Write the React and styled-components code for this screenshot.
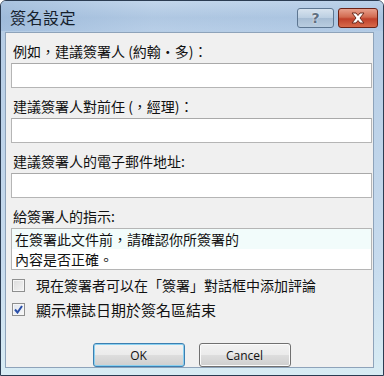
import React from 'react'
import styled, { createGlobalStyle } from 'styled-components'

const GlobalStyle = createGlobalStyle`
  html, body {
    margin: 0;
    padding: 0;
    background: #ffffff;
  }
  body {
    font-family: "Noto Sans CJK TC", "Noto Sans", sans-serif;
  }
`

const App = () => {
  return (
    <>
      <GlobalStyle />
      <Window>
        <TitleBar>
          <Title>簽名設定</Title>
          <Controls>
            <HelpButton>?</HelpButton>
            <CloseButton>
              <svg width="16" height="12" viewBox="0 0 16 12">
                <path
                  d="M2 1 L6 1 L8 3.5 L10 1 L14 1 L10 6 L14 11 L10 11 L8 8.5 L6 11 L2 11 L6 6 Z"
                  fill="#ffffff"
                  stroke="#6b2a1c"
                  strokeWidth="1"
                  strokeLinejoin="round"
                />
              </svg>
            </CloseButton>
          </Controls>
        </TitleBar>

        <Body>
          <Field>
            <Label>例如，建議簽署人 (約翰·多)：</Label>
            <Input />
          </Field>
          <Field>
            <Label>建議簽署人對前任 (，經理)：</Label>
            <Input />
          </Field>
          <Field>
            <Label>建議簽署人的電子郵件地址:</Label>
            <Input />
          </Field>
          <Field>
            <Label>給簽署人的指示:</Label>
            <TextArea>
              <TextLine>在簽署此文件前，請確認你所簽署的</TextLine>
              <TextLine>內容是否正確。</TextLine>
            </TextArea>
          </Field>

          <Checks>
            <CheckRow>
              <Box />
              <CheckText>現在簽署者可以在「簽署」對話框中添加評論</CheckText>
            </CheckRow>
            <CheckRow>
              <Box checked>
                <svg width="9" height="9" viewBox="0 0 9 9">
                  <path d="M1 4.5 L3.5 7.5 L8 1" fill="none" stroke="#2a4fa8" strokeWidth="2" />
                </svg>
              </Box>
              <CheckText big>顯示標誌日期於簽名區結束</CheckText>
            </CheckRow>
          </Checks>

          <Buttons>
            <Button primary>OK</Button>
            <Button>Cancel</Button>
          </Buttons>
        </Body>
      </Window>
    </>
  )
}

export default App

const Window = styled.div`
  width: 384px;
  height: 376px;
  box-sizing: border-box;
  border: 1px solid #2b3c52;
  border-radius: 6px 6px 0 0;
  background: linear-gradient(180deg, #b4cbe4 0%, #c7dbee 70%, #d8ecf4 100%);
  display: flex;
  flex-direction: column;
  overflow: hidden;
`

const TitleBar = styled.div`
  height: 30px;
  flex: none;
  display: flex;
  justify-content: space-between;
  align-items: center;
  padding: 0 5px 0 9px;
  background: linear-gradient(90deg, rgba(150, 180, 214, 0.55) 0%, rgba(196, 214, 236, 0.25) 40%, rgba(170, 196, 226, 0.3) 100%),
    linear-gradient(180deg, #c2d6eb 0%, #a9c3df 55%, #b4cce6 100%);
`

const Title = styled.div`
  font-size: 16px;
  color: #15202c;
  letter-spacing: 0.5px;
  padding-top: 2px;
`

const Controls = styled.div`
  display: flex;
  gap: 4px;
  align-items: center;
  padding-top: 4px;
`

const HelpButton = styled.div`
  width: 37px;
  height: 20px;
  box-sizing: border-box;
  border: 1px solid #5d7691;
  border-radius: 3px;
  background: linear-gradient(180deg, #d7e3ef 0%, #bccfe2 48%, #a7bdd4 52%, #b9cde0 100%);
  display: flex;
  align-items: center;
  justify-content: center;
  font-family: "DejaVu Sans", sans-serif;
  font-weight: bold;
  font-size: 14px;
  color: #5f6f80;
  text-shadow: 0 0 2px #ffffff;
`

const CloseButton = styled.div`
  width: 40px;
  height: 20px;
  box-sizing: border-box;
  border: 1px solid #6b2216;
  border-radius: 3px;
  background: linear-gradient(180deg, #e8a08c 0%, #d26a50 45%, #c0402a 55%, #d86a4a 100%);
  display: flex;
  align-items: center;
  justify-content: center;
`

const Body = styled.div`
  flex: 1;
  margin: 1px 9px 8px 4px;
  border: 1px solid #8ea3ba;
  background: #f0f0f0;
  padding: 8px 1px 0 5px;
  display: flex;
  flex-direction: column;
`

const Field = styled.div`
  display: flex;
  flex-direction: column;
  margin-bottom: 8px;
`

const Label = styled.div`
  height: 20px;
  line-height: 20px;
  margin: 0 0 2px 2px;
  font-size: 14px;
  color: #111111;
`

const Input = styled.div`
  height: 25px;
  box-sizing: border-box;
  background: #ffffff;
  border: 1px solid #b5b5b5;
  border-top-color: #a9a9a9;
`

const TextArea = styled.div`
  height: 42px;
  box-sizing: border-box;
  background: linear-gradient(180deg, #f2fcfb 0 20px, #ffffff 20px);
  border: 1px solid #b5b5b5;
  padding: 0 3px;
  display: flex;
  flex-direction: column;
`

const TextLine = styled.div`
  height: 20px;
  line-height: 20px;
  font-size: 14px;
  color: #111111;
  white-space: nowrap;
`

const Checks = styled.div`
  display: flex;
  flex-direction: column;
  gap: 2px;
  margin-top: -4px;
`

const CheckRow = styled.div`
  height: 22px;
  display: flex;
  align-items: center;
  gap: 11px;
  padding-left: 1px;
`

const Box = styled.div`
  width: 13px;
  height: 13px;
  box-sizing: border-box;
  border: 1px solid #8e8f8f;
  background: linear-gradient(135deg, #dcdcdc 0%, #f4f4f4 100%);
  box-shadow: inset 0 0 0 1px #f6f6f6;
  display: flex;
  align-items: center;
  justify-content: center;
  ${props => props.checked && `
    background: linear-gradient(135deg, #dfe5ef 0%, #f8f8f8 100%);
  `}
`

const CheckText = styled.span`
  font-size: ${props => (props.big ? '15px' : '14px')};
  color: #111111;
  white-space: nowrap;
`

const Buttons = styled.div`
  display: flex;
  justify-content: center;
  gap: 14px;
  margin-top: 23px;
`

const Button = styled.div`
  width: 92px;
  height: 24px;
  box-sizing: border-box;
  border: 1px solid ${props => (props.primary ? '#3c7fb1' : '#707070')};
  border-radius: 3px;
  background: linear-gradient(180deg, #f2f2f2 0%, #ebebeb 48%, #dddddd 52%, #cfcfcf 100%);
  box-shadow: ${props => (props.primary ? 'inset 0 0 0 1px #8ad0f0' : 'inset 0 0 0 1px #fbfbfb')};
  display: flex;
  align-items: center;
  justify-content: center;
  font-family: "Open Sans", "Noto Sans", sans-serif;
  font-size: 12px;
  color: #111111;
`
